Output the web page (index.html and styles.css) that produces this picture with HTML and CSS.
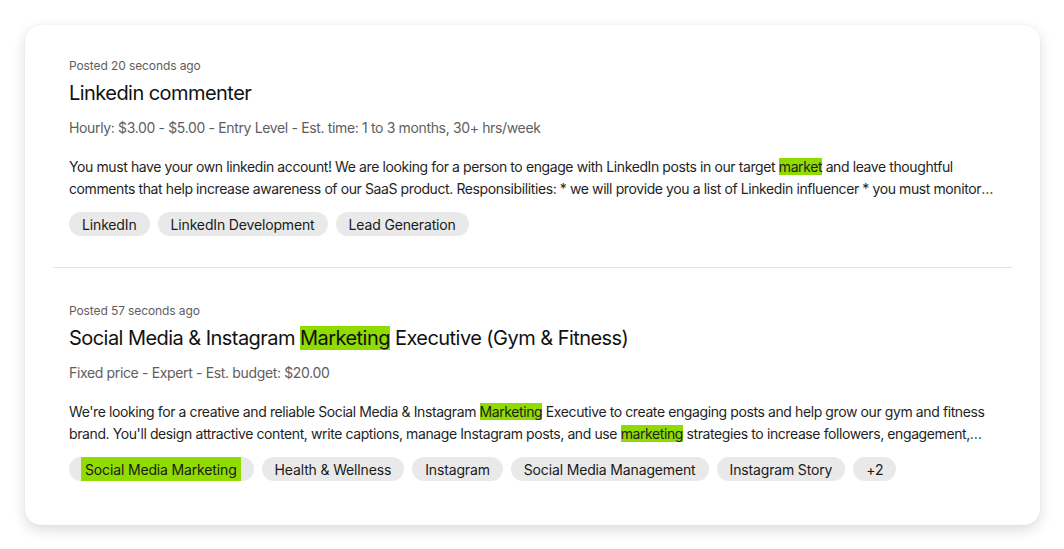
FILE: index.html
```html
<!DOCTYPE html>
<html lang="en">
<head>
    <meta charset="UTF-8">
    <meta name="viewport" content="width=device-width, initial-scale=1.0">
    <title>Job feed</title>
    <link rel="stylesheet" href="styles.css">
</head>
<body>
    <div class="job-card">
        <section class="job-tile">
            <div class="job-posted">Posted 20 seconds ago</div>
            <h2 class="job-title">Linkedin commenter</h2>
            <div class="job-meta">Hourly: $3.00 - $5.00 - Entry Level - Est. time: 1 to 3 months, 30+ hrs/week</div>
            <p class="job-desc">You must have your own linkedin account! We are looking for a person to engage with LinkedIn posts in our target <mark>market</mark> and leave thoughtful comments that help increase awareness of our SaaS product. Responsibilities: * we will provide you a list of Linkedin influencer * you must monitor their posts and leave a comment within a few hours of posting.</p>
            <div class="job-tags">
                <span class="tag">LinkedIn</span>
                <span class="tag">LinkedIn Development</span>
                <span class="tag">Lead Generation</span>
            </div>
        </section>

        <section class="job-tile">
            <div class="job-posted">Posted 57 seconds ago</div>
            <h2 class="job-title">Social Media &amp; Instagram <mark>Marketing</mark> Executive (Gym &amp; Fitness)</h2>
            <div class="job-meta">Fixed price - Expert - Est. budget: $20.00</div>
            <p class="job-desc">We're looking for a creative and reliable Social Media &amp; Instagram <mark>Marketing</mark> Executive to create engaging posts and help grow our gym and fitness brand. You'll design attractive content, write captions, manage Instagram posts, and use <mark>marketing</mark> strategies to increase followers, engagement, and enquiries for our classes.</p>
            <div class="job-tags">
                <span class="tag tag-match"><mark>Social Media Marketing</mark></span>
                <span class="tag">Health &amp; Wellness</span>
                <span class="tag">Instagram</span>
                <span class="tag">Social Media Management</span>
                <span class="tag">Instagram Story</span>
                <span class="tag">+2</span>
            </div>
        </section>
    </div>
</body>
</html>
```

FILE: styles.css
```css
* {
    margin: 0;
    padding: 0;
    box-sizing: border-box;
}
body {
    background: #fff;
    padding: 25px 24px 25px 25px;
    font-family: Inter, 'Noto Sans', sans-serif;
    color: #181818;
}
.job-card {
    background: #fff;
    border-radius: 16px;
    box-shadow: 0 5px 14px rgba(0, 0, 0, 0.14), 0 0 2px rgba(0, 0, 0, 0.06);
    padding: 0 28px 13px;
}
.job-tile {
    padding: 32px 16px 31px;
}
.job-tile + .job-tile {
    border-top: 1px solid #e4e4e4;
    padding-top: 34px;
}
.job-posted {
    font-size: 12px;
    line-height: 18px;
    color: #5e5e5e;
    letter-spacing: -0.1px;
}
.job-title {
    font-size: 20px;
    line-height: 28px;
    font-weight: 400;
    margin-top: 4px;
    color: #111;
    letter-spacing: -0.55px;
}
.job-meta {
    font-size: 14px;
    line-height: 20px;
    color: #5e5e5e;
    margin-top: 11px;
    letter-spacing: -0.35px;
}
.job-desc {
    font-size: 14px;
    line-height: 22px;
    margin-top: 18px;
    color: #1f1f1f;
    letter-spacing: -0.4px;
    display: -webkit-box;
    -webkit-line-clamp: 2;
    -webkit-box-orient: vertical;
    overflow: hidden;
}
mark {
    background: #90db00;
    color: inherit;
}
.job-tags {
    display: flex;
    flex-wrap: wrap;
    gap: 8px;
    margin-top: 12px;
}
.tag {
    display: inline-flex;
    align-items: center;
    height: 24px;
    padding: 0 13px;
    border-radius: 12px;
    background: #e9e9e9;
    font-size: 14px;
    color: #1a1a1a;
    letter-spacing: -0.15px;
}
.tag-match mark {
    display: inline-flex;
    align-items: center;
    height: 24px;
    padding: 0 4px;
    margin-left: -1px;
}
```
